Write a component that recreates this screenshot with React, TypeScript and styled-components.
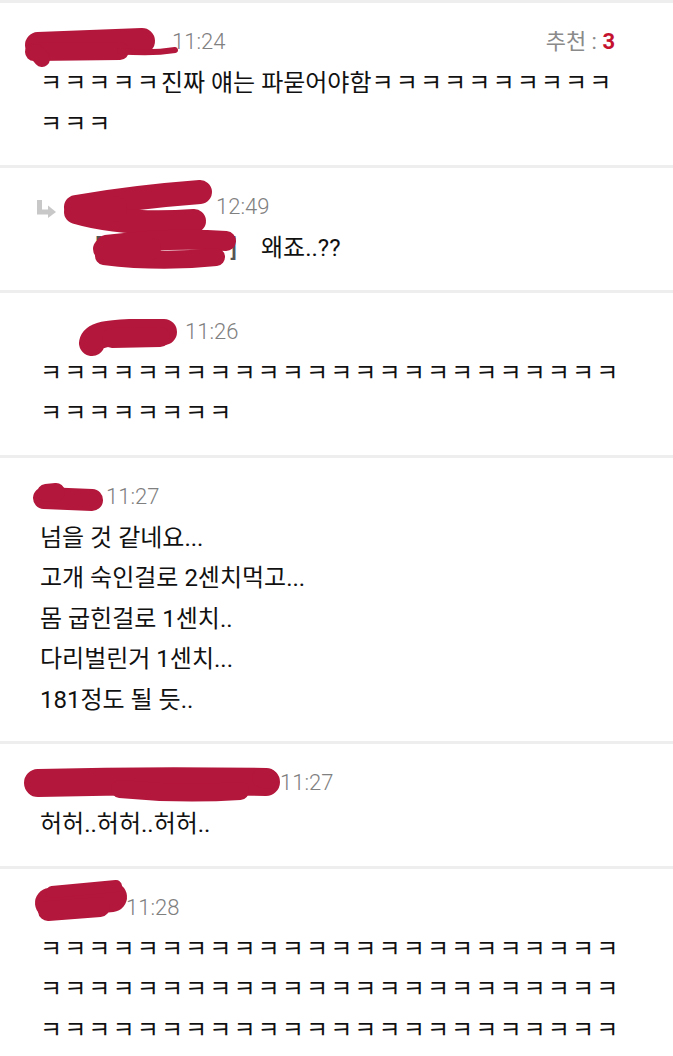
import React from "react";
import styled, { createGlobalStyle } from "styled-components";

const GlobalStyle = createGlobalStyle`
  html, body {
    margin: 0;
    padding: 0;
    background: #ffffff;
  }
  body {
    font-family: Roboto, "Noto Sans CJK KR", sans-serif;
    color: #111111;
  }
`;

const List = styled.div`
  display: flex;
  flex-direction: column;
  width: 673px;
`;

const Separator = styled.div`
  height: 3px;
  background: #eeeeee;
`;

const Comment = styled.div`
  display: flex;
  flex-direction: column;
  padding: 22px 40px 21px 40px;
`;

const Header = styled.div`
  display: flex;
  align-items: center;
  gap: 4px;
  height: 34px;
`;

const NameBox = styled.span<{ $w: number }>`
  position: relative;
  display: inline-block;
  flex: none;
  width: ${(p) => p.$w}px;
  height: 34px;
`;

const ScribbleSvg = styled.svg`
  position: absolute;
  left: 0;
  top: 0;
  overflow: visible;
  pointer-events: none;
`;

const Time = styled.span`
  font-family: Roboto, sans-serif;
  font-weight: 300;
  font-size: 22px;
  color: #808080;
  line-height: 34px;
`;

const Recommend = styled.span`
  margin-left: auto;
  margin-right: 18px;
  font-size: 22px;
  line-height: 34px;
  color: #8a8a8a;
  font-family: Roboto, "Noto Sans CJK KR", sans-serif;
  font-weight: 400;
`;

const RecommendCount = styled.b`
  font-family: Roboto, sans-serif;
  font-weight: 700;
  color: #c4122f;
`;

const ReplyArrow = styled.svg`
  flex: none;
  margin-left: -4px;
  margin-right: 0px;
`;

const Body = styled.div<{ $indent?: number }>`
  margin-top: 4px;
  padding-left: ${(p) => p.$indent ?? 0}px;
  font-size: 24px;
  line-height: 40.5px;
  color: #111111;
`;

const Line = styled.div`
  height: 40.5px;
  white-space: nowrap;
`;

const Laugh = styled.span`
  letter-spacing: 2.1px;
`;

const Mention = styled.span`
  position: relative;
  display: inline-flex;
  justify-content: space-between;
  width: 142px;
  color: #555555;
  font-weight: 500;
  vertical-align: top;
`;

const Message = styled.span`
  margin-left: 24px;
`;

type Stroke = { d: string; w: number };

const Scribble: React.FC<{ strokes: Stroke[]; ox: number; oy: number }> = ({ strokes, ox, oy }) => (
  <ScribbleSvg width="1" height="1">
    <g transform={`translate(${-ox} ${-oy})`} fill="none" stroke="#b3173b" strokeLinecap="round" strokeLinejoin="round">
      {strokes.map((s, i) => (
        <path key={i} d={s.d} strokeWidth={s.w} />
      ))}
    </g>
  </ScribbleSvg>
);

const Arrow = () => (
  <ReplyArrow width="22" height="22" viewBox="0 0 22 22">
    <path d="M3.5 4 V16 H13" fill="none" stroke="#c8c8c8" strokeWidth="5" />
    <path d="M12 9.5 L20 16 L12 22 Z" fill="#c8c8c8" />
  </ReplyArrow>
);

const TextLine: React.FC<{ text: string }> = ({ text }) => {
  const parts = text.split(/(ㅋ+)/).filter((p) => p.length > 0);
  return (
    <Line>
      {parts.map((p, i) => (p[0] === "ㅋ" ? <Laugh key={i}>{p}</Laugh> : <React.Fragment key={i}>{p}</React.Fragment>))}
    </Line>
  );
};

type CommentData = {
  nameWidth: number;
  headerTop: number;
  nameX: number;
  strokes: Stroke[];
  time: string;
  recommend?: number;
  reply?: boolean;
  lines?: string[];
};

const k = (n: number) => "ㅋ".repeat(n);

const comments: CommentData[] = [
  {
    nameWidth: 128,
    headerTop: 25,
    nameX: 40,
    strokes: [
      { d: "M38 45 L142 41", w: 26 },
      { d: "M34 52 L120 51", w: 18 },
      { d: "M36 52 L42 59", w: 16 },
      { d: "M120 51 Q150 54 175 50", w: 6 },
    ],
    time: "11:24",
    recommend: 3,
    lines: [`${k(5)}진짜 얘는 파묻어야함${k(10)}`, k(3)],
  },
  {
    nameWidth: 150,
    headerTop: 188,
    nameX: 58,
    strokes: [
      { d: "M72 205 Q130 195 196 190", w: 24 },
      { d: "M72 210 Q120 224 190 219", w: 24 },
      { d: "M75 207 L110 207", w: 26 },
    ],
    time: "12:49",
    reply: true,
  },
  {
    nameWidth: 141,
    headerTop: 314,
    nameX: 40,
    strokes: [
      { d: "M92 342 C94 333 110 332 130 331 L164 331", w: 26 },
      { d: "M112 337 L160 336", w: 20 },
    ],
    time: "11:26",
    lines: [k(24), k(8)],
  },
  {
    nameWidth: 62,
    headerTop: 478,
    nameX: 40,
    strokes: [
      { d: "M44 496 L92 498", w: 22 },
      { d: "M46 491 L56 490", w: 18 },
    ],
    time: "11:27",
    lines: [
      "넘을 것 같네요...",
      "고개 숙인걸로 2센치먹고...",
      "몸 굽힌걸로 1센치..",
      "다리벌린거 1센치...",
      "181정도 될 듯..",
    ],
  },
  {
    nameWidth: 236,
    headerTop: 767,
    nameX: 40,
    strokes: [
      { d: "M38 784 Q150 781 266 783", w: 28 },
      { d: "M120 790 Q180 796 240 792", w: 18 },
      { d: "M262 779 L268 780", w: 20 },
    ],
    time: "11:27",
    lines: ["허허..허허..허허.."],
  },
  {
    nameWidth: 82,
    headerTop: 891,
    nameX: 40,
    strokes: [
      { d: "M50 903 L112 897", w: 30 },
      { d: "M48 911 L100 907", w: 20 },
      { d: "M52 892 L116 886", w: 12 },
    ],
    time: "11:28",
    lines: [k(24), k(24), k(24)],
  },
];

const mentionStrokes: Stroke[] = [
  { d: "M106 244 Q170 236 226 240", w: 20 },
  { d: "M104 255 Q160 262 216 256", w: 18 },
  { d: "M104 248 L150 248", w: 22 },
];

export default function App() {
  return (
    <>
      <GlobalStyle />
      <List>
        {comments.map((c, i) => (
          <React.Fragment key={i}>
            <Separator />
            <Comment>
              <Header>
                {c.reply && <Arrow />}
                <NameBox $w={c.nameWidth}>
                  <Scribble strokes={c.strokes} ox={c.nameX} oy={c.headerTop} />
                </NameBox>
                <Time>{c.time}</Time>
                {c.recommend !== undefined && (
                  <Recommend>
                    추천 : <RecommendCount>{c.recommend}</RecommendCount>
                  </Recommend>
                )}
              </Header>
              {c.reply ? (
                <Body $indent={55}>
                  <Line>
                    <Mention>
                      <span>[</span>
                      <span>]</span>
                      <Scribble strokes={mentionStrokes} ox={95} oy={227} />
                    </Mention>
                    <Message>왜죠..??</Message>
                  </Line>
                </Body>
              ) : (
                <Body>
                  {c.lines!.map((l, j) => (
                    <TextLine key={j} text={l} />
                  ))}
                </Body>
              )}
            </Comment>
          </React.Fragment>
        ))}
      </List>
    </>
  );
}
